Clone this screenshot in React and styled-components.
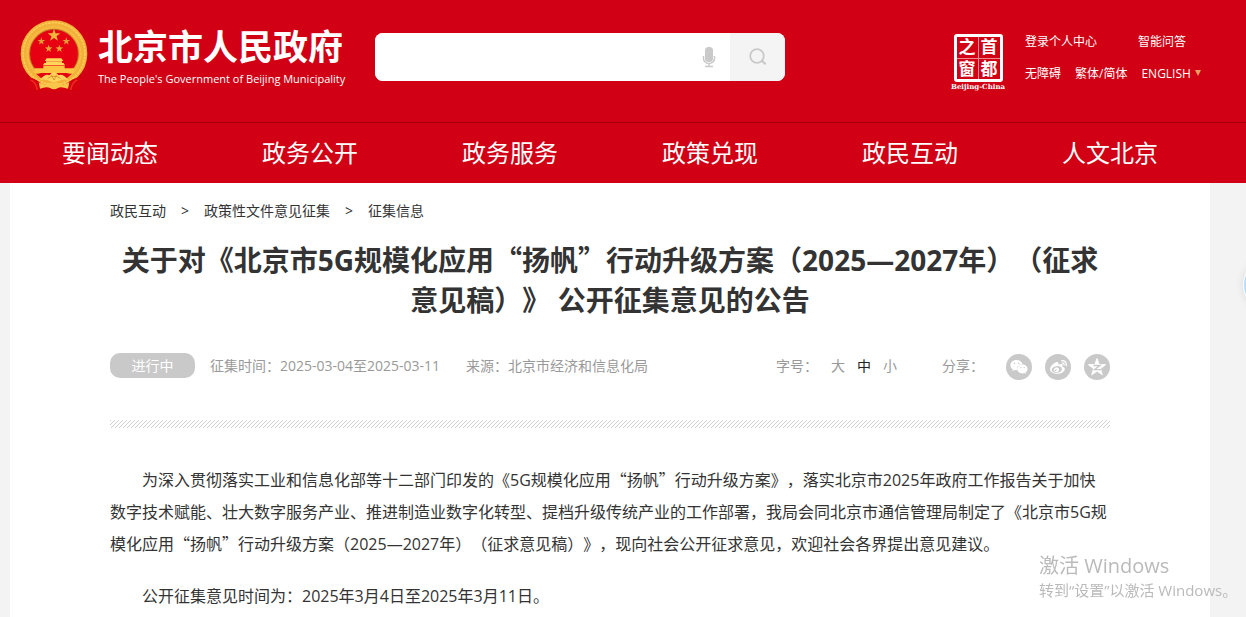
import React, { useState } from 'react';
import styled, { createGlobalStyle } from 'styled-components';
import { FaWeixin, FaWeibo } from 'react-icons/fa';

const navItems = ['要闻动态', '政务公开', '政务服务', '政策兑现', '政民互动', '人文北京'];
const crumbs = ['政民互动', '政策性文件意见征集', '征集信息'];
const sizes = ['大', '中', '小'];

const title = '关于对《北京市5G规模化应用“扬帆”行动升级方案（2025—2027年）（征求意见稿）》 公开征集意见的公告';
const paragraphs = [
    '为深入贯彻落实工业和信息化部等十二部门印发的《5G规模化应用“扬帆”行动升级方案》，落实北京市2025年政府工作报告关于加快数字技术赋能、壮大数字服务产业、推进制造业数字化转型、提档升级传统产业的工作部署，我局会同北京市通信管理局制定了《北京市5G规模化应用“扬帆”行动升级方案（2025—2027年）（征求意见稿）》，现向社会公开征求意见，欢迎社会各界提出意见建议。',
    '公开征集意见时间为：2025年3月4日至2025年3月11日。',
];

// curly quotes need the full-width glyphs of the Chinese font
const withQuotes = (text) =>
    text.split(/(“[^”]*”)/).map((part, i) => (i % 2 ? <Quoted key={i}>{part}</Quoted> : part));

const star = (cx, cy, r) => {
    const points = [];
    for (let i = 0; i < 10; i++) {
        const radius = i % 2 ? r * 0.4 : r;
        const angle = (Math.PI / 5) * i - Math.PI / 2;
        points.push(`${cx + radius * Math.cos(angle)},${cy + radius * Math.sin(angle)}`);
    }
    return points.join(' ');
};

function Emblem() {
    return (
        <EmblemSvg viewBox="18 20 204 216" aria-hidden="true">
            <path d="M40 176 L42 228 Q78 238 100 230 L120 236 L142 230 Q170 238 196 228 L200 176Z" fill="#c9000c" />
            <circle cx="120" cy="121" r="86" fill="#e60012" stroke="#f2b138" strokeWidth="28" />
            <circle cx="120" cy="121" r="93" fill="none" stroke="#fbce5c" strokeWidth="5" strokeDasharray="7 3" />
            <circle cx="120" cy="121" r="80" fill="none" stroke="#f6c04a" strokeWidth="5" strokeDasharray="5 2" />
            <circle cx="120" cy="121" r="73" fill="none" stroke="#a9331a" strokeWidth="2" />
            <path d="M42 190 Q66 196 84 212 L156 212 Q174 196 198 190 L198 228 Q120 240 42 228Z" fill="#d50010" />
            <path d="M50 200 Q66 206 70 230 M190 200 Q174 206 170 230" stroke="#ee2a20" strokeWidth="5" fill="none" />
            <polygon points={star(120, 66, 20)} fill="#f0b63c" />
            <polygon points={star(82, 84, 12)} fill="#e09a36" />
            <polygon points={star(157, 84, 12)} fill="#e09a36" />
            <polygon points={star(104, 106, 12)} fill="#e8a238" />
            <polygon points={star(136, 106, 12)} fill="#e8a238" />
            <path d="M98 135H142L148 143H92Z M96 144H144V149H96Z M91 149H149L153 156H87Z" fill="#ffd659" />
            <path d="M88 157H152V166H88Z M62 165H180V179H60Z" fill="#fbc445" />
            <path d="M66 181H174L152 200H88Z" fill="#e60012" />
            <path d="M78 199 Q94 180 106 186 Q120 168 134 186 Q146 180 162 199 L140 200 Q120 212 100 200Z" fill="#ffd35c" />
            <path d="M101 195 Q120 182 139 195 M112 184L120 200L128 184" fill="none" stroke="#cb7a1b" strokeWidth="2" />
            <path d="M74 207 Q88 216 106 210 Q120 204 134 210 Q152 216 166 207 L162 226 Q140 218 132 224 Q120 232 108 224 Q98 218 78 226Z" fill="#f8c64b" />
        </EmblemSvg>
    );
}

function Header() {
    return (
        <HeaderSection>
            <HeaderTop>
                <Logo href="#">
                    <Emblem />
                    <LogoText>
                        <LogoName>北京市人民政府</LogoName>
                        <LogoEnglish>The People's Government of Beijing Municipality</LogoEnglish>
                    </LogoText>
                </Logo>
                <SearchForm onSubmit={(e) => e.preventDefault()}>
                    <SearchInput type="text" aria-label="搜索" />
                    <VoiceButton type="button" aria-label="语音输入">
                        <svg width="14" height="22" viewBox="0 0 14 22" fill="none" stroke="#c9c9c9">
                            <rect x="3" y="1" width="8" height="15" rx="3.5" fill="#c9c9c9" stroke="none" />
                            <path d="M1.5 10v2.5a5.5 5 0 0 0 11 0V10M7 17.5v3M3 20.5h8" strokeWidth="1.5" />
                        </svg>
                    </VoiceButton>
                    <SearchButton type="submit" aria-label="提交搜索">
                        <svg width="18" height="18" viewBox="0 0 18 18" fill="none" stroke="#c9c9c9" strokeWidth="1.8">
                            <circle cx="8" cy="8" r="6.8" />
                            <path d="M12.8 12.6L16.6 16.2" strokeWidth="2.2" />
                        </svg>
                    </SearchButton>
                </SearchForm>
                <HeaderRight>
                    <Seal href="#">
                        <SealGrid>
                            <SealChar>之</SealChar>
                            <SealChar>首</SealChar>
                            <SealChar>窗</SealChar>
                            <SealChar>都</SealChar>
                        </SealGrid>
                        <SealName>Beijing-China</SealName>
                    </Seal>
                    <TopLinks>
                        <TopRow $gap="41px">
                            <TopLink href="#">登录个人中心</TopLink>
                            <TopLink href="#">智能问答</TopLink>
                        </TopRow>
                        <TopRow $gap="14px">
                            <TopLink href="#">无障碍</TopLink>
                            <TopLink href="#">繁体/简体</TopLink>
                            <TopLink href="#">
                                ENGLISH
                                <Caret viewBox="0 0 6 6"><path d="M0 0H6L3 6Z" fill="#e8a060" /></Caret>
                            </TopLink>
                        </TopRow>
                    </TopLinks>
                </HeaderRight>
            </HeaderTop>
            <Nav>
                <NavList>
                    {navItems.map((item) => (
                        <NavItem key={item}>
                            <NavLink href="#">{item}</NavLink>
                        </NavItem>
                    ))}
                </NavList>
            </Nav>
        </HeaderSection>
    );
}

function App() {
    const [size, setSize] = useState('中');

    return (
        <>
            <GlobalStyle />
            <Header />
            <MainContainer>
                <Article>
                    <Breadcrumb>
                        {crumbs.map((crumb, i) => (
                            <React.Fragment key={crumb}>
                                {i > 0 && <span>&gt;</span>}
                                <a href="#">{crumb}</a>
                            </React.Fragment>
                        ))}
                    </Breadcrumb>
                    <Title>{withQuotes(title)}</Title>
                    <InfoContainer>
                        <Status>进行中</Status>
                        <InfoTime>征集时间：2025-03-04至2025-03-11</InfoTime>
                        <span>来源：北京市经济和信息化局</span>
                        <Tools>
                            <span>字号：</span>
                            <SizeGroup>
                                {sizes.map((item) => (
                                    <SizeButton
                                        key={item}
                                        type="button"
                                        $active={item === size}
                                        onClick={() => setSize(item)}
                                    >
                                        {item}
                                    </SizeButton>
                                ))}
                            </SizeGroup>
                            <span>分享：</span>
                            <ShareGroup>
                                <ShareButton type="button" aria-label="微信"><FaWeixin size={18} /></ShareButton>
                                <ShareButton type="button" aria-label="微博"><FaWeibo size={17} /></ShareButton>
                                <ShareButton type="button" aria-label="QQ空间">
                                    <svg width="20" height="20" viewBox="0 0 20 20">
                                        <polygon points={star(10, 10.5, 9)} fill="#fff" stroke="#fff" strokeLinejoin="round" />
                                        <path d="M6.5 8.5H12.8L7.6 12.6H14" fill="none" stroke="#c9c9c9" strokeWidth="1.4" />
                                    </svg>
                                </ShareButton>
                            </ShareGroup>
                        </Tools>
                    </InfoContainer>
                    <Divider />
                    {paragraphs.map((text) => (
                        <Description key={text} $size={size}>{withQuotes(text)}</Description>
                    ))}
                </Article>
            </MainContainer>
            <FloatButton type="button" aria-label="智能助手" />
            <Watermark>
                <WatermarkTitle>激活 Windows</WatermarkTitle>
                <WatermarkText>转到“设置”以激活 Windows。</WatermarkText>
            </Watermark>
        </>
    );
}

const GlobalStyle = createGlobalStyle`
    * {
        box-sizing: border-box;
    }
    body {
        margin: 0;
        background: #f3f3f3;
        color: #333;
        font-family: "Open Sans", "Noto Sans CJK SC", sans-serif;
        font-size: 14px;
        text-spacing-trim: space-all;
    }
    #root {
        display: flex;
        flex-direction: column;
        height: 100vh;
        overflow: hidden;
    }
    a {
        color: inherit;
        text-decoration: none;
    }
`;
const PlainButton = styled.button`
    padding: 0;
    border: 0;
    background: none;
    color: inherit;
    font: inherit;
    cursor: pointer;
`;
const HeaderSection = styled.header`
    flex-shrink: 0;
    background: #d20014;
    color: #fff;
`;
const HeaderTop = styled.div`
    display: flex;
    align-items: flex-start;
    height: 122px;
    padding: 20px 43px 0 20px;
`;
const Logo = styled.a`
    display: flex;
    width: 355px;
`;
const EmblemSvg = styled.svg`
    width: 68px;
    height: 72px;
    margin-right: 10px;
`;
const LogoText = styled.div`
    white-space: nowrap;
`;
const LogoName = styled.div`
    padding-top: 6px;
    font-size: 35px;
    font-weight: bold;
    line-height: 42px;
`;
const LogoEnglish = styled.div`
    font-size: 11px;
    line-height: 22px;
`;
const SearchForm = styled.form`
    display: flex;
    width: 410px;
    height: 48px;
    margin-top: 13px;
    border-radius: 8px;
    background: #fff;
    overflow: hidden;
`;
const SearchInput = styled.input`
    flex: 1;
    min-width: 0;
    padding: 0 16px;
    border: 0;
    outline: 0;
    font: inherit;
`;
const VoiceButton = styled(PlainButton)`
    display: flex;
    align-items: center;
    justify-content: center;
    width: 42px;
`;
const SearchButton = styled(PlainButton)`
    display: flex;
    align-items: center;
    justify-content: center;
    width: 55px;
    background: #f4f4f4;
`;
const HeaderRight = styled.div`
    display: flex;
    margin-left: auto;
    gap: 20px;
`;
const Seal = styled.a`
    display: flex;
    flex-direction: column;
    align-items: center;
    width: 54px;
    padding-top: 14px;
`;
const SealGrid = styled.div`
    display: grid;
    grid-template-columns: 1fr 1fr;
    gap: 1px;
    width: 49px;
    height: 48px;
    border: 3px solid #fff;
    border-radius: 3px;
    background: #f08a90;
`;
const SealChar = styled.span`
    display: flex;
    align-items: center;
    justify-content: center;
    background: #d20014;
    font-size: 17px;
    font-weight: bold;
    line-height: 20px;
`;
const SealName = styled.span`
    font-family: "DejaVu Serif", serif;
    font-size: 7px;
    font-weight: bold;
    line-height: 10px;
    white-space: nowrap;
`;
const TopLinks = styled.div`
    display: flex;
    flex-direction: column;
    gap: 12px;
    width: 178px;
    padding-top: 12px;
`;
const TopRow = styled.div`
    display: flex;
    gap: ${(props) => props.$gap};
`;
const TopLink = styled.a`
    font-size: 12px;
    line-height: 20px;
    white-space: nowrap;
`;
const Caret = styled.svg`
    width: 6px;
    height: 6px;
    margin: 0 0 2px 4px;
`;
const Nav = styled.nav`
    padding: 0 36px 0 10px;
    border-top: 1px solid #a50010;
`;
const NavList = styled.ul`
    display: flex;
    margin: 0;
    padding: 0;
    list-style: none;
`;
const NavItem = styled.li`
    flex: 1;
    text-align: center;
`;
const NavLink = styled.a`
    font-size: 24px;
    line-height: 60px;
`;
const MainContainer = styled.main`
    flex: 1;
    margin: 0 36px 0 10px;
    background: #fff;
`;
const Article = styled.article`
    padding: 18px 100px 0;
`;
const Breadcrumb = styled.div`
    display: flex;
    gap: 15px;
    line-height: 20px;
`;
const Title = styled.h1`
    margin: 19px 0 33px;
    font-size: 28px;
    font-weight: bold;
    line-height: 40px;
    text-align: center;
`;
const Quoted = styled.span`
    font-family: "Noto Sans CJK SC", sans-serif;
    line-height: 1;
`;
const InfoContainer = styled.div`
    display: flex;
    align-items: flex-start;
    color: #999;
    line-height: 25px;
    white-space: nowrap;
`;
const Status = styled.span`
    width: 85px;
    margin-right: 15px;
    border-radius: 10px;
    background: #c9c9c9;
    color: #fff;
    text-align: center;
`;
const InfoTime = styled.span`
    min-width: 240px;
    margin-right: 16px;
`;
const Tools = styled.div`
    display: flex;
    margin-left: auto;
`;
const SizeGroup = styled.div`
    display: flex;
    gap: 12px;
    margin: 0 45px 0 13px;
`;
const SizeButton = styled(PlainButton)`
    height: 25px;
    line-height: 25px;
    color: ${(props) => (props.$active ? '#222' : '#999')};
`;
const ShareGroup = styled.div`
    display: flex;
    gap: 13px;
    padding-top: 1px;
    margin-left: 22px;
`;
const ShareButton = styled(PlainButton)`
    display: flex;
    align-items: center;
    justify-content: center;
    width: 26px;
    height: 26px;
    border-radius: 50%;
    background: #c9c9c9;
    color: #fff;
`;
const Divider = styled.div`
    height: 8px;
    margin: 40px 0 36px;
    background: linear-gradient(
        135deg,
        #d0d0d0 12.5%,
        transparent 12.5% 50%,
        #d0d0d0 50% 62.5%,
        transparent 62.5%
    );
    background-size: 4px 4px;
`;
const fontSizes = { 大: '18px', 中: '16px', 小: '14px' };
const Description = styled.p`
    margin: 0 0 20px;
    font-size: ${(props) => fontSizes[props.$size]};
    line-height: 32px;
    text-indent: 2em;
`;
const FloatButton = styled(PlainButton)`
    position: fixed;
    top: 258px;
    right: -51px;
    width: 54px;
    height: 54px;
    border: 1px solid #fff;
    border-radius: 50%;
    background: #b5dcfb;
    box-shadow: 0 0 8px rgba(0, 0, 0, 0.1);
`;
const Watermark = styled.div`
    position: fixed;
    right: 6px;
    bottom: 16px;
    width: 201px;
    color: #bababa;
    white-space: nowrap;
    pointer-events: none;
`;
const WatermarkTitle = styled.div`
    font-size: 20px;
    line-height: 26px;
`;
const WatermarkText = styled.div`
    font-size: 15px;
    line-height: 22px;
`;

export default App;
